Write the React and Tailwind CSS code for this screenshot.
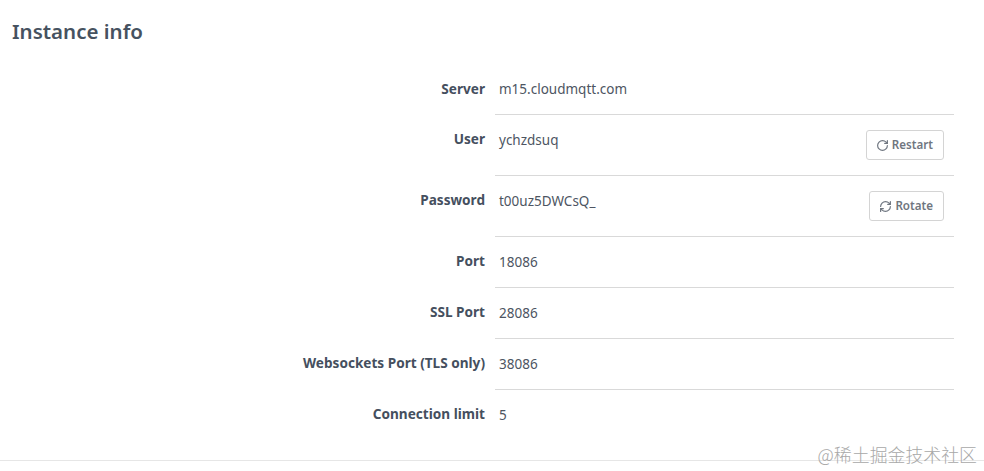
import { RotateCw, RefreshCw } from "lucide-react";

const rows = [
  { label: "Server", value: "m15.cloudmqtt.com", height: "h-[51px]", first: true },
  { label: "User", value: "ychzdsuq", height: "h-[61px]", action: "Restart", Icon: RotateCw },
  { label: "Password", value: "t00uz5DWCsQ_", height: "h-[61px]", action: "Rotate", Icon: RefreshCw },
  { label: "Port", value: "18086", height: "h-[51px]" },
  { label: "SSL Port", value: "28086", height: "h-[51px]" },
  { label: "Websockets Port (TLS only)", value: "38086", height: "h-[51px]" },
  { label: "Connection limit", value: "5", height: "h-[51px]", last: true },
];

function Row({ label, value, height, action, Icon, first, last }) {
  return (
    <div className={`flex ${height}`}>
      <div
        className={`w-[485px] shrink-0 text-right text-[13.6px] leading-[20px] font-bold text-[#454f5e] ${
          first ? "pt-[15px]" : "pt-[14px]"
        }`}
      >
        {label}
      </div>
      <div
        className={`ml-[10px] w-[459px] flex justify-between pl-1 ${
          last ? "" : "border-b border-[#d9d9d9]"
        }`}
      >
        <span className="pt-[15px] text-[13.5px] leading-[20px] text-[#4d5562]">
          {value}
        </span>
        {action && (
          <button className="mt-[15px] mr-[10px] h-[30px] pl-[9px] pr-[10px] flex items-center gap-[3px] border border-[#d4d4d4] rounded-[3px] text-[11.6px] font-semibold text-[#6f7680] bg-white">
            <Icon size={13} strokeWidth={2.2} />
            {action}
          </button>
        )}
      </div>
    </div>
  );
}

export default function App() {
  return (
    <div className="relative h-[471px] w-[984px] overflow-hidden bg-white font-['Noto_Sans','Open_Sans',sans-serif]">
      <h2 className="pl-3 pt-[15px] h-[64px] text-[20.5px] leading-[32px] font-semibold text-[#465260]">
        Instance info
      </h2>
      <div>
        {rows.map((row) => (
          <Row key={row.label} {...row} />
        ))}
      </div>
      <div className="mt-[19px] border-t border-[#e6e6e6]" />
      <div className="absolute right-[7px] top-[443px] text-[17.9px] leading-[22px] font-light text-[#a8a8a8] font-['Noto_Sans_CJK_SC',sans-serif]">
        @稀土掘金技术社区
      </div>
    </div>
  );
}
